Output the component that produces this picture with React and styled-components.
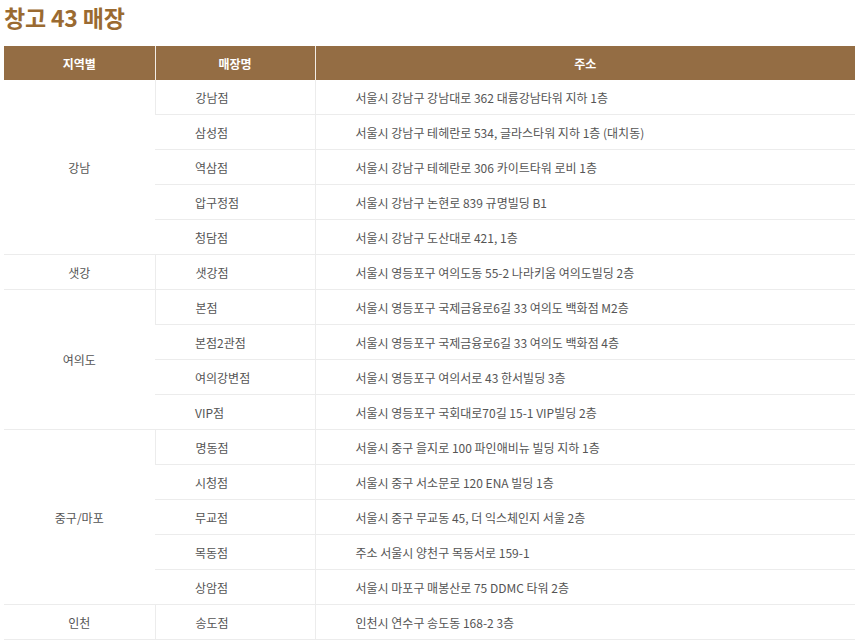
import React from "react";
import styled, { createGlobalStyle } from "styled-components";

const GlobalStyle = createGlobalStyle`
  body {
    margin: 0;
    background: #ffffff;
    font-family: "Noto Sans CJK KR", "Noto Sans", sans-serif;
  }
`;

const Page = styled.div`
  padding: 0 5px 0 4px;
`;

const Title = styled.h2`
  margin: 0;
  padding: 2px 0 0 0;
  height: 44px;
  font-size: 23px;
  line-height: 30px;
  font-weight: 700;
  color: #9a6a31;
  letter-spacing: -0.2px;
`;

const Table = styled.table`
  width: 851px;
  border-collapse: collapse;
  table-layout: fixed;
  font-size: 12px;
  color: #555555;
`;

const Head = styled.th`
  height: 34px;
  padding: 0;
  background: #946d44;
  color: #ffffff;
  font-size: 12px;
  font-weight: 700;
  text-align: center;
  border-left: 1px solid #f3ede6;
  &:first-child {
    border-left: none;
  }
`;

const Row = styled.tr`
  border-bottom: 1px solid #ececec;
`;

const Cell = styled.td`
  height: 34px;
  padding: 0 0 0 ${(p) => (p.$pad ? `${p.$pad}px` : "0")};
  text-align: ${(p) => (p.$center ? "center" : "left")};
  border-left: 1px solid #ececec;
  white-space: nowrap;
  &:first-child {
    border-left: none;
  }
`;

const regions = [
  {
    name: "강남",
    stores: [
      ["강남점", "서울시 강남구 강남대로 362 대륭강남타워 지하 1층"],
      ["삼성점", "서울시 강남구 테헤란로 534, 글라스타워 지하 1층 (대치동)"],
      ["역삼점", "서울시 강남구 테헤란로 306 카이트타워 로비 1층"],
      ["압구정점", "서울시 강남구 논현로 839 규명빌딩 B1"],
      ["청담점", "서울시 강남구 도산대로 421, 1층"],
    ],
  },
  {
    name: "샛강",
    stores: [["샛강점", "서울시 영등포구 여의도동 55-2 나라키움 여의도빌딩 2층"]],
  },
  {
    name: "여의도",
    stores: [
      ["본점", "서울시 영등포구 국제금융로6길 33 여의도 백화점 M2층"],
      ["본점2관점", "서울시 영등포구 국제금융로6길 33 여의도 백화점 4층"],
      ["여의강변점", "서울시 영등포구 여의서로 43 한서빌딩 3층"],
      ["VIP점", "서울시 영등포구 국회대로70길 15-1 VIP빌딩 2층"],
    ],
  },
  {
    name: "중구/마포",
    stores: [
      ["명동점", "서울시 중구 을지로 100 파인애비뉴 빌딩 지하 1층"],
      ["시청점", "서울시 중구 서소문로 120 ENA 빌딩 1층"],
      ["무교점", "서울시 중구 무교동 45, 더 익스체인지 서울 2층"],
      ["목동점", "주소 서울시 양천구 목동서로 159-1"],
      ["상암점", "서울시 마포구 매봉산로 75 DDMC 타워 2층"],
    ],
  },
  {
    name: "인천",
    stores: [["송도점", "인천시 연수구 송도동 168-2 3층"]],
  },
];

export default function App() {
  return (
    <Page>
      <GlobalStyle />
      <Title>창고 43 매장</Title>
      <Table>
        <colgroup>
          <col style={{ width: 151 }} />
          <col style={{ width: 160 }} />
          <col />
        </colgroup>
        <thead>
          <tr>
            <Head>지역별</Head>
            <Head>매장명</Head>
            <Head>주소</Head>
          </tr>
        </thead>
        <tbody>
          {regions.map((region) =>
            region.stores.map(([store, address], i) => (
              <Row key={store}>
                {i === 0 && (
                  <Cell $center rowSpan={region.stores.length}>
                    {region.name}
                  </Cell>
                )}
                <Cell $pad={40}>{store}</Cell>
                <Cell $pad={40}>{address}</Cell>
              </Row>
            ))
          )}
        </tbody>
      </Table>
    </Page>
  );
}
